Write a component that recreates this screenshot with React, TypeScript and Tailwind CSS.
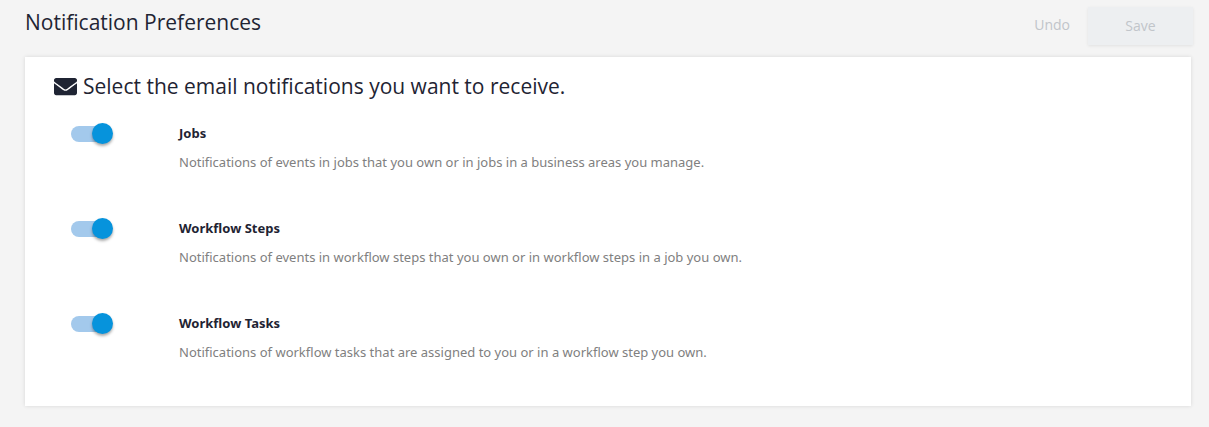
import React, { useState } from "react";
import { FaEnvelope } from "react-icons/fa";

interface Preference {
  id: string;
  title: string;
  description: string;
}

interface ToggleProps {
  id: string;
  checked: boolean;
  onChange: (checked: boolean) => void;
}

const preferences: Preference[] = [
  {
    id: "jobs",
    title: "Jobs",
    description: "Notifications of events in jobs that you own or in jobs in a business areas you manage.",
  },
  {
    id: "workflow-steps",
    title: "Workflow Steps",
    description: "Notifications of events in workflow steps that you own or in workflow steps in a job you own.",
  },
  {
    id: "workflow-tasks",
    title: "Workflow Tasks",
    description: "Notifications of workflow tasks that are assigned to you or in a workflow step you own.",
  },
];

const allOn: Record<string, boolean> = { jobs: true, "workflow-steps": true, "workflow-tasks": true };

const Toggle: React.FC<ToggleProps> = ({ id, checked, onChange }) => (
  <label htmlFor={id} className="relative flex items-center w-[42px] h-[21px] shrink-0 cursor-pointer">
    <input
      id={id}
      type="checkbox"
      aria-labelledby={`${id}-title`}
      aria-describedby={`${id}-description`}
      checked={checked}
      onChange={(e) => onChange(e.target.checked)}
      className="peer appearance-none w-9 h-4 rounded-full bg-gray-300 checked:bg-[#a3c9ec] cursor-pointer"
    />
    <span className="absolute left-0 top-0 size-[21px] rounded-full bg-gray-100 shadow-[0_2px_3px_rgba(0,0,0,0.35)] peer-checked:left-[21px] peer-checked:bg-[#0693dc]" />
  </label>
);

const App: React.FC = () => {
  const [saved, setSaved] = useState(allOn);
  const [enabled, setEnabled] = useState(allOn);
  const unchanged = preferences.every(({ id }) => saved[id] === enabled[id]);

  return (
    <div className="min-h-screen bg-[#f4f4f4] pl-[25px] pr-4 pt-[7px] pb-5 font-['Open_Sans',sans-serif] text-[#1f2433]">
      <header className="flex justify-between items-start">
        <h1 className="text-[21px] leading-[30px]">Notification Preferences</h1>
        <div className="flex">
          <button
            disabled={unchanged}
            onClick={() => setEnabled(saved)}
            className="px-[18px] h-9 text-sm text-[#52607a] disabled:text-[#c1c5ca]"
          >
            Undo
          </button>
          <button
            disabled={unchanged}
            onClick={() => setSaved(enabled)}
            className="w-[105px] h-[38px] text-sm bg-[#0693dc] text-white disabled:bg-[#edeff1] disabled:text-[#c1c5ca] shadow-[0_1px_3px_rgba(0,0,0,0.08)]"
          >
            Save
          </button>
        </div>
      </header>

      <main className="mt-3 mr-0.5 bg-white px-[29px] pt-3.5 pb-[43px] shadow-[0_0_4px_rgba(0,0,0,0.12)]">
        <h2 className="flex items-center gap-1.5 text-[21px] leading-[30px]">
          <FaEnvelope size={23} className="shrink-0" />
          Select the email notifications you want to receive.
        </h2>
        <ul className="mt-[22px] pl-[17px] flex flex-col gap-[45px] font-['Noto_Sans',sans-serif]">
          {preferences.map(({ id, title, description }) => (
            <li key={id} className="flex items-start gap-[66px]">
              <Toggle
                id={id}
                checked={enabled[id]}
                onChange={(checked) => setEnabled({ ...enabled, [id]: checked })}
              />
              <div>
                <h3 id={`${id}-title`} className="text-[13px] leading-[21px] font-bold">
                  {title}
                </h3>
                <p id={`${id}-description`} className="mt-2 text-[13px] leading-[21px] text-[#808080]">
                  {description}
                </p>
              </div>
            </li>
          ))}
        </ul>
      </main>
    </div>
  );
};

export default App;
